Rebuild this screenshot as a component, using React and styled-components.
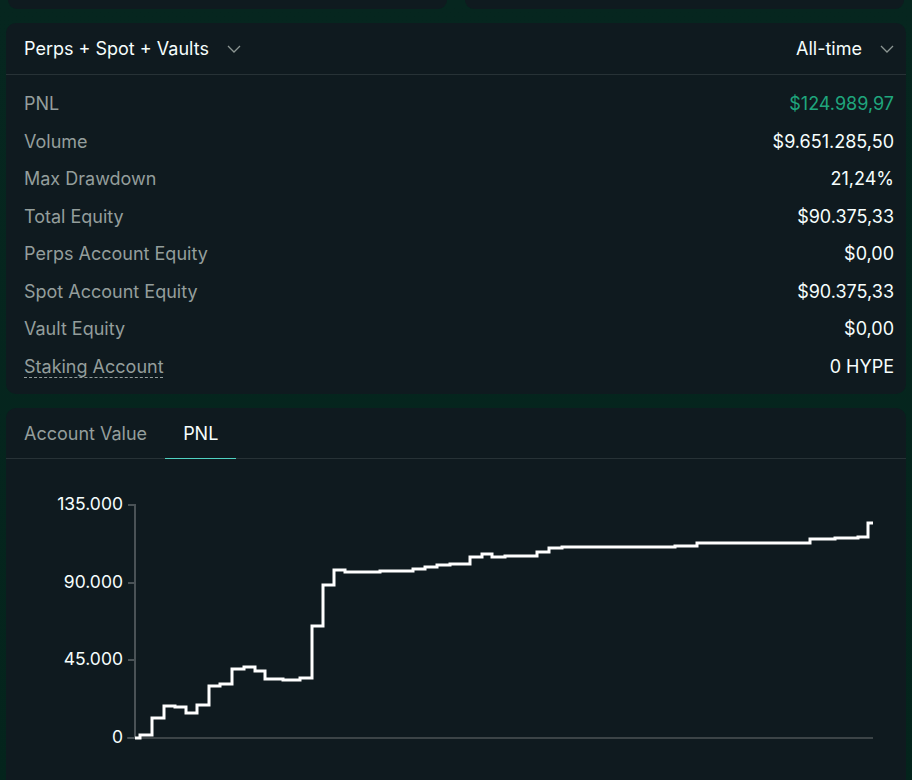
import React from 'react'
import styled, { createGlobalStyle } from 'styled-components'

const stats = [
  { label: 'PNL', value: '$124.989,97', tone: 'green' },
  { label: 'Volume', value: '$9.651.285,50' },
  { label: 'Max Drawdown', value: '21,24%' },
  { label: 'Total Equity', value: '$90.375,33' },
  { label: 'Perps Account Equity', value: '$0,00' },
  { label: 'Spot Account Equity', value: '$90.375,33' },
  { label: 'Vault Equity', value: '$0,00' },
  { label: 'Staking Account', value: '0 HYPE', dashed: true }
]

// page coords of the PNL step line: [x where the step happens, new y]
const steps = [
  [140, 734], [152, 717], [164, 705], [175, 706], [186, 712], [197, 704],
  [209, 685], [220, 683], [232, 668], [244, 666], [255, 670], [265, 678],
  [283, 679], [300, 677], [312, 625], [323, 584], [334, 569], [345, 571],
  [380, 570], [413, 568], [425, 566], [437, 564], [450, 563], [470, 556],
  [482, 553], [492, 556], [505, 555], [537, 551], [549, 547], [562, 546],
  [675, 545], [697, 542], [810, 538], [835, 537], [858, 536], [868, 522]
]

const ticks = [
  { label: '135.000', y: 504 },
  { label: '90.000', y: 582 },
  { label: '45.000', y: 659 },
  { label: '0', y: 737 }
]

function Chevron() {
  return (
    <svg width="16" height="10" viewBox="0 0 16 10" fill="none">
      <path d="M2 2 L8 8 L14 2" stroke="#8c9693" strokeWidth="1.3" />
    </svg>
  )
}

function PnlChart() {
  const d = 'M135 737 ' + steps.map(([x, y]) => `H${x} V${y}`).join(' ') + ' H873'
  return (
    <ChartSvg viewBox="0 0 900 330">
      <g transform="translate(-6,-458)">
        <line x1="127" y1="737" x2="873" y2="737" stroke="#3c4447" strokeWidth="2" />
        <line x1="135" y1="503" x2="135" y2="738" stroke="#4a5256" strokeWidth="2" />
        {ticks.map(t => (
          <g key={t.label}>
            <line x1="128" y1={t.y} x2="135" y2={t.y} stroke="#4a5256" strokeWidth="2" />
            <AxisText x="123" y={t.y} textAnchor="end" dominantBaseline="middle">
              {t.label}
            </AxisText>
          </g>
        ))}
        <path d={d} fill="none" stroke="#ffffff" strokeWidth="3" strokeLinejoin="miter" />
      </g>
    </ChartSvg>
  )
}

export default function App() {
  return (
    <Page>
      <GlobalStyle />
      <TopRow>
        <StubCard />
        <StubCard />
      </TopRow>
      <Card>
        <CardHeader>
          <Select>
            Perps + Spot + Vaults
            <Chevron />
          </Select>
          <Select>
            All-time
            <Chevron />
          </Select>
        </CardHeader>
        <StatList>
          {stats.map(s => (
            <StatRow key={s.label}>
              <Label dashed={s.dashed}>{s.label}</Label>
              <Value tone={s.tone}>{s.value}</Value>
            </StatRow>
          ))}
        </StatList>
      </Card>
      <ChartCard>
        <Tabs>
          <Tab>Account Value</Tab>
          <Tab active>PNL</Tab>
        </Tabs>
        <PnlChart />
      </ChartCard>
    </Page>
  )
}

const GlobalStyle = createGlobalStyle`
  body {
    margin: 0;
    background: #04241c;
    font-family: Inter, "Noto Sans", sans-serif;
    overflow: hidden;
  }
`

const Page = styled.div`
  display: flex;
  flex-direction: column;
  gap: 14px;
  padding: 0 6px;
  min-height: 100vh;
  background: linear-gradient(180deg, #06261f 0%, #04241c 100%);
`

const TopRow = styled.div`
  display: flex;
  gap: 18px;
  padding: 0 2px;
`

const StubCard = styled.div`
  flex: 1;
  height: 9px;
  background: #0f1a1f;
  border-radius: 0 0 10px 10px;
`

const Card = styled.div`
  background: #0f1a1f;
  border-radius: 10px;
  overflow: hidden;
`

const CardHeader = styled.div`
  display: flex;
  justify-content: space-between;
  align-items: center;
  height: 51px;
  padding: 0 11px 0 18px;
  border-bottom: 1px solid #273236;
`

const Select = styled.div`
  display: flex;
  align-items: center;
  gap: 17px;
  color: #f6fefd;
  font-size: 18px;
`

const StatList = styled.div`
  display: flex;
  flex-direction: column;
  padding: 10px 12px 9px 18px;
`

const StatRow = styled.div`
  display: flex;
  justify-content: space-between;
  align-items: center;
  height: 37.5px;
  font-size: 18px;
`

const Label = styled.span`
  color: #949e9c;
  text-decoration: ${p => (p.dashed ? 'underline dashed' : 'none')};
  text-decoration-thickness: 1px;
  text-underline-offset: 4px;
`

const Value = styled.span`
  color: ${p => (p.tone === 'green' ? '#1fa67d' : '#f6fefd')};
`

const ChartCard = styled(Card)`
  border-radius: 10px 10px 0 0;
  min-height: 400px;
`

const Tabs = styled.div`
  display: flex;
  height: 50px;
  border-bottom: 1px solid #273236;
`

const Tab = styled.div`
  display: flex;
  align-items: center;
  padding: 0 18px;
  font-size: 18px;
  color: ${p => (p.active ? '#f6fefd' : '#949e9c')};
  box-shadow: ${p => (p.active ? 'inset 0 -1px 0 #50d2c1' : 'none')};
  margin-bottom: -1px;
`

const ChartSvg = styled.svg`
  display: block;
  width: 900px;
  height: 330px;
`

const AxisText = styled.text`
  fill: #f6fefd;
  font-size: 17.5px;
  font-family: Inter, "Noto Sans", sans-serif;
`
